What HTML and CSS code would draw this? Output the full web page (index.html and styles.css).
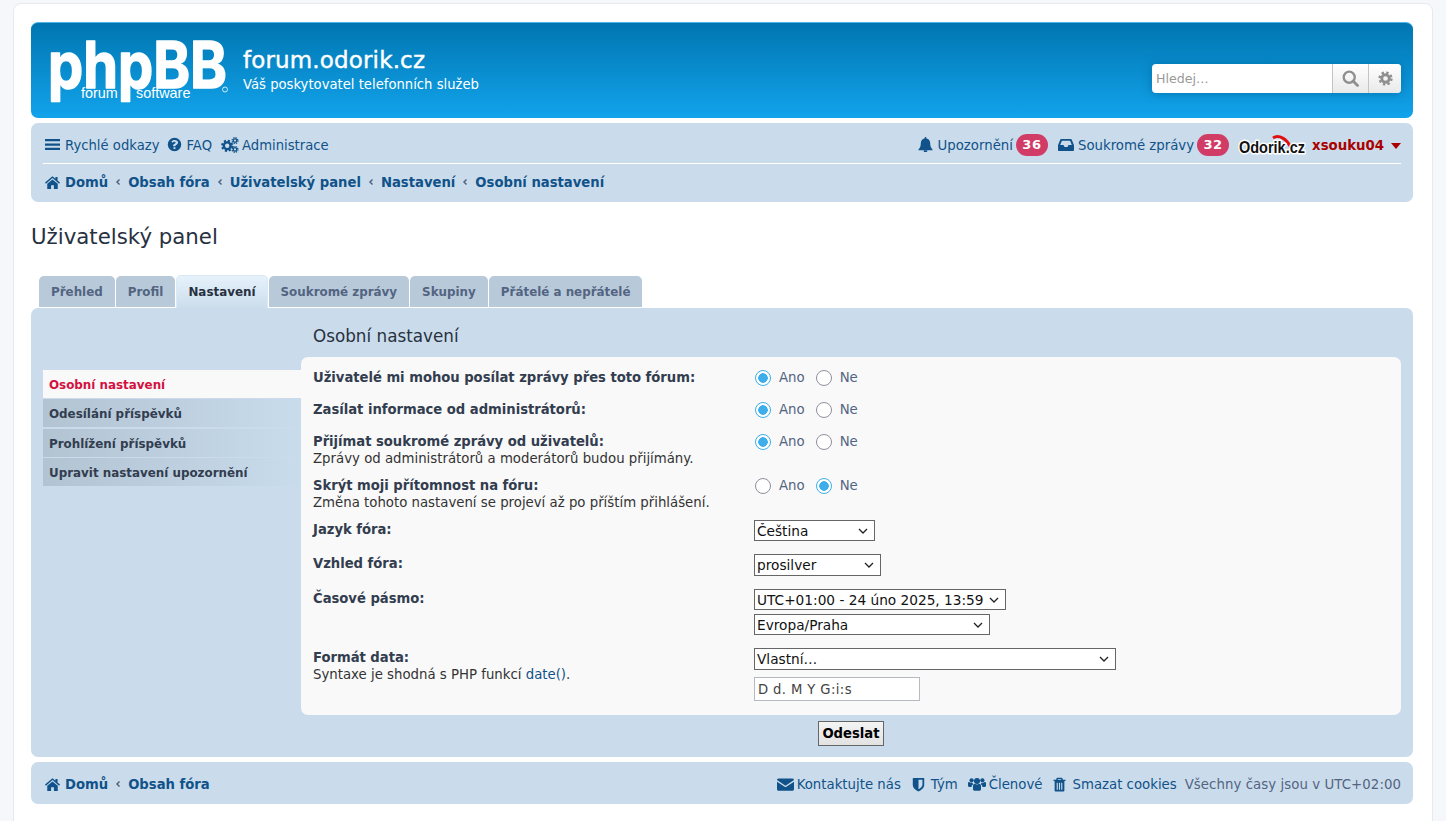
FILE: index.html
```html
<!DOCTYPE html>
<html lang="cs">
<head>
<meta charset="utf-8">
<title>forum.odorik.cz - Uživatelský panel</title>
<link rel="stylesheet" href="styles.css">
</head>
<body>
<svg class="defs" width="0" height="0" aria-hidden="true">
  <defs>
    <symbol id="i-bars" viewBox="0 0 16 16"><path d="M0 2.200h16v2.400H0zM0 6.800h16v2.400H0zM0 11.400h16v2.400H0z"/></symbol>
    <symbol id="i-q" viewBox="0 0 16 16"><path fill-rule="evenodd" d="M8 .8a7.200 7.200 0 1 1 0 14.400A7.200 7.200 0 0 1 8 .8zM6.900 10.800v2h2.100v-2zM8.100 3.200c-1.600 0-2.700.7-3.400 1.800l1.400 1.100c.5-.6.9-1 1.800-1 .7 0 1.200.4 1.200.9 0 .6-.4.9-1 1.200-.9.5-1.600 1-1.600 2.200v.4H9v-.3c0-.5.3-.7.9-1 1-.6 1.900-1.300 1.900-2.600 0-1.600-1.700-2.700-3.700-2.700z"/></symbol>
    <symbol id="i-cogs" viewBox="0 0 18 16">
      <g fill="none" stroke="currentColor"><circle cx="6.200" cy="8.800" r="3.400" stroke-width="2.400"/><circle cx="6.200" cy="8.800" r="5" stroke-width="2.200" stroke-dasharray="2.100 1.830"/>
      <circle cx="14" cy="3.600" r="1.700" stroke-width="1.300"/><circle cx="14" cy="3.600" r="2.900" stroke-width="1.300" stroke-dasharray="1.300 1"/>
      <circle cx="14" cy="12.400" r="1.700" stroke-width="1.300"/><circle cx="14" cy="12.400" r="2.900" stroke-width="1.300" stroke-dasharray="1.300 1"/></g>
    </symbol>
    <symbol id="i-home" viewBox="0 0 16 16"><path d="M8 1.200 0 8l1 1.200L8 3.300l7 5.900L16 8l-2.600-2.200V2h-2.300v1.900zM2.400 9.400v5.400h4.100v-3.800h3v3.800h4.100V9.400L8 4.800z"/></symbol>
    <symbol id="i-bell" viewBox="0 0 16 16"><path d="M8 0c-.6 0-1 .4-1 1v.5C4.600 2 3 3.900 3 6.500c0 3.500-1 5.500-2.500 6.800V14h15v-.7C14 12 13 10 13 6.500 13 3.900 11.400 2 9 1.500V1c0-.6-.4-1-1-1zM6 14.500a2 2 0 0 0 4 0z"/></symbol>
    <symbol id="i-inbox" viewBox="0 0 16 16"><path fill-rule="evenodd" d="M3.200 2h9.600c.4 0 .7.200.9.600L16 8.200V13c0 .6-.4 1-1 1H1c-.6 0-1-.4-1-1V8.200L2.300 2.600c.2-.4.5-.6.9-.6zM3.900 3.800 2.200 8h3.300l1 2h3l1-2h3.300l-1.700-4.200z"/></symbol>
    <symbol id="i-mail" viewBox="0 0 16 16"><path d="M0 3.800C0 3 .6 2.300 1.400 2.300h13.200c.8 0 1.400.7 1.400 1.500L8 9.100zM0 5.500l8 5.200 8-5.200v6.900c0 .8-.6 1.400-1.400 1.400H1.400C.6 13.800 0 13.200 0 12.400z"/></symbol>
    <symbol id="i-shield" viewBox="0 0 16 16"><path fill-rule="evenodd" d="M2.500 1h11c.4 0 .6.300.6.600V8.500c0 3.300-3.700 5.800-6.100 6.900-2.400-1.100-6.100-3.600-6.100-6.900V1.600c0-.3.200-.6.600-.6zM8 2.900v10.200c1.900-1 4.200-2.800 4.200-4.800V2.900z"/></symbol>
    <symbol id="i-group" viewBox="0 0 18 16"><circle cx="9" cy="5" r="3"/><circle cx="3.600" cy="4.300" r="2.100"/><circle cx="14.400" cy="4.300" r="2.100"/><path d="M5 10c0-1.500 1.200-2.200 2-2.200.6.500 1.200.8 2 .8s1.400-.3 2-.8c.8 0 2 .7 2 2.200v3.300c0 .9-.6 1.400-1.400 1.400H6.400c-.8 0-1.400-.5-1.400-1.400zM0 7.400c0-.8.600-1.300 1.300-1.300.6.500 1.300.8 2.200.8.500 0 .9-.1 1.200-.2-.1.800.3 1.300.7 1.600-1.200.5-1.800 1.500-1.800 2.600H1.200C.5 10.900 0 10.500 0 9.800zM18 7.400c0-.8-.6-1.300-1.300-1.300-.6.500-1.300.8-2.200.8-.5 0-.9-.1-1.200-.2.100.8-.3 1.300-.7 1.600 1.200.5 1.800 1.500 1.800 2.600h2.400c.7 0 1.200-.4 1.200-1.100z"/></symbol>
    <symbol id="i-trash" viewBox="0 0 16 16"><path fill-rule="evenodd" d="M5.800.8h4.400c.5 0 .9.300 1 .7l.5 1.300h2.700v1.500h-1.200v10c0 .7-.5 1.100-1.100 1.100H3.900c-.6 0-1.100-.4-1.100-1.100v-10H1.600V2.800h2.700l.5-1.300c.1-.4.500-.7 1-.7zM6 2.800h4l-.3-.7H6.300zM5 6v7.500h1.200V6zM7.400 6v7.500h1.200V6zM9.800 6v7.500H11V6z"/></symbol>
    <symbol id="i-search" viewBox="0 0 16 16"><circle cx="6.800" cy="6.800" r="5.200" fill="none" stroke="currentColor" stroke-width="2.200"/><path d="M10.400 10.400 14.600 14.600" stroke="currentColor" stroke-width="2.600" stroke-linecap="round"/></symbol>
    <symbol id="i-cog" viewBox="0 0 16 16"><g fill="none" stroke="currentColor"><circle cx="8" cy="8" r="4" stroke-width="3"/><circle cx="8" cy="8" r="6.300" stroke-width="2.600" stroke-dasharray="2.500 2.450"/></g></symbol>
    <symbol id="i-angle" viewBox="0 0 8 8"><path d="M5.500 1.500 3 4l2.500 2.500" fill="none" stroke="currentColor" stroke-width="1.500"/></symbol>
  </defs>
</svg>

<div class="wrap">
  <header class="headerbar">
    <svg class="logo" viewBox="0 0 179 62" role="img" aria-label="phpBB">
      <text class="logo-main" x="-1" y="48" textLength="179" lengthAdjust="spacingAndGlyphs">phpBB</text>
      <text class="logo-small" x="32" y="58">forum</text>
      <text class="logo-small" x="87" y="58">software</text>
      <circle class="logo-reg" cx="176" cy="49.500" r="2.500"/>
    </svg>
    <div class="site-desc">
      <h1 class="site-name">forum.odorik.cz</h1>
      <p class="site-tag">Váš poskytovatel telefonních služeb</p>
    </div>
    <form class="search">
      <input class="search-input" type="text" placeholder="Hledej…">
      <span class="search-btn search-btn-first"><svg class="ico-search"><use href="#i-search"/></svg></span>
      <span class="search-btn"><svg class="ico-cog"><use href="#i-cog"/></svg></span>
    </form>
  </header>

  <nav class="navbar">
    <div class="nav-row">
      <ul class="nav-list nav-left">
        <li><a class="nav-link" href="#"><svg class="ico ico-bars"><use href="#i-bars"/></svg>Rychlé odkazy</a></li>
        <li><a class="nav-link" href="#"><svg class="ico ico-q"><use href="#i-q"/></svg>FAQ</a></li>
        <li><a class="nav-link nav-link-tight" href="#"><svg class="ico ico-cogs"><use href="#i-cogs"/></svg>Administrace</a></li>
      </ul>
      <ul class="nav-list nav-right">
        <li><a class="nav-link nav-link-badge" href="#"><svg class="ico ico-bell"><use href="#i-bell"/></svg>Upozornění<span class="badge">36</span></a></li>
        <li><a class="nav-link nav-link-badge" href="#"><svg class="ico ico-inbox"><use href="#i-inbox"/></svg>Soukromé zprávy<span class="badge">32</span></a></li>
        <li class="user">
          <svg class="odorik" viewBox="0 0 68 24" role="img" aria-label="Odorik.cz">
            <path class="odorik-arc" d="M35 5C41 1 49 6 53 15"/>
            <text class="odorik-text" x="1" y="20" textLength="66" lengthAdjust="spacingAndGlyphs">Odorik.cz</text>
          </svg>
          <a class="username" href="#">xsouku04</a>
          <span class="caret"></span>
        </li>
      </ul>
    </div>
    <ul class="crumbs">
      <li><a href="#"><svg class="ico ico-home"><use href="#i-home"/></svg>Domů</a></li>
      <li><svg class="angle"><use href="#i-angle"/></svg><a href="#">Obsah fóra</a></li>
      <li><svg class="angle"><use href="#i-angle"/></svg><a href="#">Uživatelský panel</a></li>
      <li><svg class="angle"><use href="#i-angle"/></svg><a href="#">Nastavení</a></li>
      <li><svg class="angle"><use href="#i-angle"/></svg><a href="#">Osobní nastavení</a></li>
    </ul>
  </nav>

  <h2 class="page-title">Uživatelský panel</h2>

  <ul class="tabs">
    <li class="tab"><a href="#">Přehled</a></li>
    <li class="tab"><a href="#">Profil</a></li>
    <li class="tab tab-active"><a href="#">Nastavení</a></li>
    <li class="tab"><a href="#">Soukromé zprávy</a></li>
    <li class="tab"><a href="#">Skupiny</a></li>
    <li class="tab"><a href="#">Přátelé a nepřátelé</a></li>
  </ul>

  <main class="panel">
    <ul class="side">
      <li class="side-item side-active"><a href="#">Osobní nastavení</a></li>
      <li class="side-item"><a href="#">Odesílání příspěvků</a></li>
      <li class="side-item"><a href="#">Prohlížení příspěvků</a></li>
      <li class="side-item"><a href="#">Upravit nastavení upozornění</a></li>
    </ul>
    <form class="content">
      <h3 class="content-title">Osobní nastavení</h3>
      <div class="box">
        <dl class="row row-32">
          <dt><label>Uživatelé mi mohou posílat zprávy přes toto fórum:</label></dt>
          <dd class="radios"><label><input type="radio" name="a" checked>Ano</label><label><input type="radio" name="a">Ne</label></dd>
        </dl>
        <dl class="row row-32">
          <dt><label>Zasílat informace od administrátorů:</label></dt>
          <dd class="radios"><label><input type="radio" name="b" checked>Ano</label><label><input type="radio" name="b">Ne</label></dd>
        </dl>
        <dl class="row row-44">
          <dt><label>Přijímat soukromé zprávy od uživatelů:</label><span class="explain">Zprávy od administrátorů a moderátorů budou přijímány.</span></dt>
          <dd class="radios"><label><input type="radio" name="c" checked>Ano</label><label><input type="radio" name="c">Ne</label></dd>
        </dl>
        <dl class="row row-44">
          <dt><label>Skrýt moji přítomnost na fóru:</label><span class="explain">Změna tohoto nastavení se projeví až po příštím přihlášení.</span></dt>
          <dd class="radios"><label><input type="radio" name="d">Ano</label><label><input type="radio" name="d" checked>Ne</label></dd>
        </dl>
        <dl class="row row-34">
          <dt><label>Jazyk fóra:</label></dt>
          <dd><select class="sel sel-lang"><option>Čeština</option></select></dd>
        </dl>
        <dl class="row row-35">
          <dt><label>Vzhled fóra:</label></dt>
          <dd><select class="sel sel-style"><option>prosilver</option></select></dd>
        </dl>
        <dl class="row row-59">
          <dt><label>Časové pásmo:</label></dt>
          <dd class="stack">
            <select class="sel sel-time"><option>UTC+01:00 - 24 úno 2025, 13:59</option></select>
            <select class="sel sel-zone"><option>Evropa/Praha</option></select>
          </dd>
        </dl>
        <dl class="row">
          <dt><label>Formát data:</label><span class="explain">Syntaxe je shodná s PHP funkcí <a href="#">date()</a>.</span></dt>
          <dd class="stack">
            <select class="sel sel-date"><option>Vlastní…</option></select>
            <input class="date-input" type="text" value="D d. M Y G:i:s">
          </dd>
        </dl>
      </div>
      <div class="submit-row"><button class="submit" type="button">Odeslat</button></div>
    </form>
  </main>

  <footer class="footbar">
    <ul class="crumbs crumbs-foot">
      <li><a href="#"><svg class="ico ico-home"><use href="#i-home"/></svg>Domů</a></li>
      <li><svg class="angle"><use href="#i-angle"/></svg><a href="#">Obsah fóra</a></li>
    </ul>
    <ul class="nav-list foot-right">
      <li><a class="nav-link nav-link-tight" href="#"><svg class="ico ico-mail"><use href="#i-mail"/></svg>Kontaktujte nás</a></li>
      <li><a class="nav-link" href="#"><svg class="ico ico-shield"><use href="#i-shield"/></svg>Tým</a></li>
      <li><a class="nav-link nav-link-tight" href="#"><svg class="ico ico-group"><use href="#i-group"/></svg>Členové</a></li>
      <li><a class="nav-link" href="#"><svg class="ico ico-trash"><use href="#i-trash"/></svg>Smazat cookies</a></li>
      <li class="times">Všechny časy jsou v UTC+02:00</li>
    </ul>
  </footer>
</div>
</body>
</html>
```

FILE: styles.css
```css
* { box-sizing: border-box; }
html, body { margin: 0; padding: 0; height: 821px; overflow: hidden; }
body {
  background: #f5f7fa;
  color: #536482;
  font-family: "DejaVu Sans", Verdana, sans-serif;
  font-size: 13.300px;
  line-height: 17px;
  padding: 3px 13px 0;
}
.defs { position: absolute; }
ul, dl, dd, h1, h2, h3, p { margin: 0; padding: 0; list-style: none; }
a { color: #105289; text-decoration: none; }

.wrap {
  background: #fff;
  border: 1px solid #e6e9ed;
  border-radius: 8px;
  padding: 18px 19px 0 17px;
  height: 830px;
}

/* header */
.headerbar {
  display: flex;
  height: 96px;
  padding: 17px 12px 0 18px;
  color: #fff;
  border-radius: 7px;
  border-top: 1px solid #4fb4e6;
  background: linear-gradient(#0076b1, #12a3eb);
}
.logo { width: 179px; height: 62px; margin-right: 15px; flex: none; overflow: visible; }
.logo-main {
  font-family: Inter, sans-serif;
  font-size: 64px;
  font-weight: 700;
  fill: #fff;
  stroke: #fff;
  stroke-width: 1.500px;
  stroke-linejoin: round;
}
.logo-small { font-family: "Liberation Sans", sans-serif; font-size: 14.400px; fill: #fff; }
.logo-reg { fill: none; stroke: #fff; stroke-width: .8; }
.site-name { font-size: 23px; line-height: 27px; font-weight: 400; margin-top: 7px; letter-spacing: .15px; -webkit-text-stroke: .4px #fff; }
.site-tag { font-size: 13.200px; line-height: 17px; margin-top: 2px; }
.search {
  display: flex;
  margin: 24px 0 0 auto;
  width: 249px;
  height: 29px;
  background: #fff;
  border-radius: 4px;
  box-shadow: 0 0 10px #0075b0;
  overflow: hidden;
}
.search-input {
  flex: 1;
  min-width: 0;
  border: 0;
  outline: 0;
  padding: 0 4px;
  font: 12.600px "DejaVu Sans", sans-serif;
  background: transparent;
}
.search-input::placeholder { color: #999; }
.search-btn {
  width: 33px;
  display: flex;
  align-items: center;
  justify-content: center;
  border-left: 1px solid #c7c3bf;
  background: linear-gradient(#fff, #e9e9e9);
  color: #8f8f8f;
}
.search-btn-first { width: 36px; }
.ico-search { width: 17px; height: 17px; }
.ico-cog { width: 15px; height: 15px; }

/* nav */
.navbar {
  margin-top: 5px;
  height: 79px;
  padding: 0 12px;
  background: #cadceb;
  border-radius: 7px;
}
.nav-row {
  display: flex;
  justify-content: space-between;
  align-items: center;
  height: 41px;
  padding: 5px 0 0 2px;
  border-bottom: 1px solid #fff;
}
.nav-list { display: flex; align-items: center; gap: 9px; }
.nav-left { gap: 8px; font-size: 13.200px; }
.nav-left .ico-q { margin-right: 4px; }
.nav-left .ico-cogs { margin-left: 1px; }
.nav-row .ico { margin-top: -2px; }
.nav-right { gap: 10px; }
.nav-link { display: flex; align-items: center; color: #105289; }
.ico { fill: #105289; color: #105289; flex: none; margin-right: 5px; }
.ico-bars { width: 15px; height: 15px; }
.ico-q { width: 15px; height: 15px; }
.ico-cogs { width: 18px; height: 16px; }
.ico-bell { width: 15px; height: 15px; }
.ico-inbox { width: 16px; height: 16px; margin-right: 4px; }
.ico-home { width: 15px; height: 15px; }
.ico-mail { width: 17px; height: 17px; margin-right: 4px; }
.ico-shield { width: 15px; height: 15px; }
.ico-group { width: 18px; height: 16px; }
.ico-trash { width: 15px; height: 15px; }
.nav-link-tight .ico { margin-right: 3px; }

.badge {
  margin: -1px 0 0 3px;
  width: 32px;
  height: 22px;
  line-height: 22px;
  text-align: center;
  border-radius: 11px;
  background: #d03c66;
  color: #fff;
  font-weight: 700;
  font-size: 13px;
  letter-spacing: .6px;
}
.user { display: flex; align-items: center; margin-left: -1px; }
.odorik { width: 68px; height: 24px; margin: -2px 6px 0 0; overflow: visible; }
.odorik-text {
  font-family: "Liberation Sans", sans-serif;
  font-size: 17px;
  font-weight: 700;
  fill: #111;
  stroke: #fff;
  stroke-width: 3px;
  paint-order: stroke;
  stroke-linejoin: round;
}
.odorik-arc { fill: none; stroke: #e01010; stroke-width: 3; }
.username { color: #aa0000; font-weight: 700; }
.caret {
  width: 0;
  height: 0;
  margin: 0 0 0 7px;
  border: 5.500px solid transparent;
  border-top: 6px solid #aa0000;
  border-bottom: 0;
}

.crumbs { display: flex; align-items: center; height: 36px; padding-left: 2px; font-size: 13.200px; font-weight: 700; }
.crumbs li, .crumbs a { display: flex; align-items: center; }
.angle { width: 8px; height: 8px; margin: 0 6px; color: #536482; }

.page-title {
  font-size: 21.300px;
  line-height: 26px;
  font-weight: 400;
  color: #28313f;
  margin: 22px 0 26px;
}

/* tabs */
.tabs { display: flex; gap: 1px; padding-left: 8px; height: 32px; font-size: 11.900px; font-weight: 700; }
.tab a {
  display: block;
  height: 31px;
  padding: 9px 12px 0;
  line-height: 15px;
  color: #536482;
  background: #b8cad9;
  border-radius: 5px 5px 0 0;
}
.tab-active { margin-top: -1px; position: relative; z-index: 1; }
.tab-active a {
  height: 33px;
  padding: 9px 11px 0;
  color: #28313f;
  background: linear-gradient(#e6f2fb, #cbddec);
  border: 1px solid #dbe9f4;
  border-bottom: 0;
}

/* panel */
.panel {
  display: grid;
  grid-template-columns: 258px 1100px;
  height: 449px;
  padding: 0 12px;
  background: #cadceb;
  border-radius: 7px;
}
.side { margin-top: 62px; font-size: 11.900px; font-weight: 700; }
.side-item a {
  display: flex;
  align-items: center;
  height: 28px;
  margin-bottom: 1px;
  padding: 2px 0 0 6px;
  color: #323d4f;
  background: linear-gradient(to right, #b2c3d2, #c9dcec);
}
.side-item:nth-child(2) a { margin-bottom: 2px; }
.side-active a { color: #d31141; background: #f9f9f9; }

.content-title {
  font-size: 16.800px;
  line-height: 20px;
  font-weight: 400;
  color: #28313f;
  padding: 18px 0 11px 12px;
}
.box {
  height: 358px;
  padding: 0 12px;
  background: #f9f9f9;
  border-radius: 7px;
  color: #333;
}
.row { display: grid; grid-template-columns: 441px 1fr; padding-top: 12px; }
.row-32 { height: 32px; }
.row-44 { height: 44px; }
.row-34 { height: 34px; }
.row-35 { height: 35px; }
.row-59 { height: 59px; }
dt label { display: block; font-size: 13.200px; letter-spacing: -.03px; font-weight: 700; color: #323d4f; }
.explain { display: block; color: #333; }
.explain a { color: #105289; }

dd { margin-top: -1px; }
.radios { display: flex; gap: 10px; color: #536482; margin-top: 0; }
.radios label { display: flex; align-items: flex-start; line-height: 17px; }
.radios input {
  appearance: none;
  width: 16px;
  height: 16px;
  margin: 1px 8px 0 1px;
  border: 1.500px solid #8f8f9d;
  border-radius: 50%;
  background: #fff;
}
.radios input:checked {
  border: 1.500px solid #3daee9;
  background: radial-gradient(circle, #3daee9 0, #3daee9 4.500px, #fff 5px);
}

.sel {
  display: block;
  appearance: none;
  height: 21px;
  padding: 0 0 0 2px;
  font: 13.700px "DejaVu Sans", sans-serif;
  color: #111;
  background: #fff url("data:image/svg+xml,%3Csvg xmlns='http://www.w3.org/2000/svg' width='10' height='6'%3E%3Cpath d='M1 1l4 4 4-4' fill='none' stroke='%23222' stroke-width='1.300'/%3E%3C/svg%3E") no-repeat right 6px center;
  border: 1px solid #666;
  border-radius: 0;
}
.sel-lang { width: 121px; }
.sel-style { width: 127px; height: 22px; }
.sel-time { width: 252px; }
.sel-zone { width: 236px; margin-top: 4px; }
.sel-date { width: 362px; height: 22px; }
.date-input {
  display: block;
  width: 166px;
  height: 24px;
  margin-top: 7px;
  padding: 0 3px;
  font: 13.200px "DejaVu Sans", sans-serif;
  letter-spacing: .38px;
  color: #444;
  background: #fff;
  border: 1px solid #b4bac0;
}

.submit-row { display: flex; justify-content: center; padding-top: 6px; }
.submit {
  width: 66px;
  height: 25px;
  padding: 0;
  font: 700 13.200px "DejaVu Sans", sans-serif;
  color: #000;
  background: linear-gradient(#f4f4f4, #e2e2e2);
  border: 1px solid #666;
}

/* footer */
.footbar {
  display: flex;
  justify-content: space-between;
  align-items: center;
  height: 42px;
  margin-top: 5px;
  padding: 2px 12px 0;
  background: #cadceb;
  border-radius: 7px;
}
.crumbs-foot { height: auto; }
.foot-right { gap: 10px; }
.times { color: #536482; margin-left: -2px; letter-spacing: .07px; }
```
